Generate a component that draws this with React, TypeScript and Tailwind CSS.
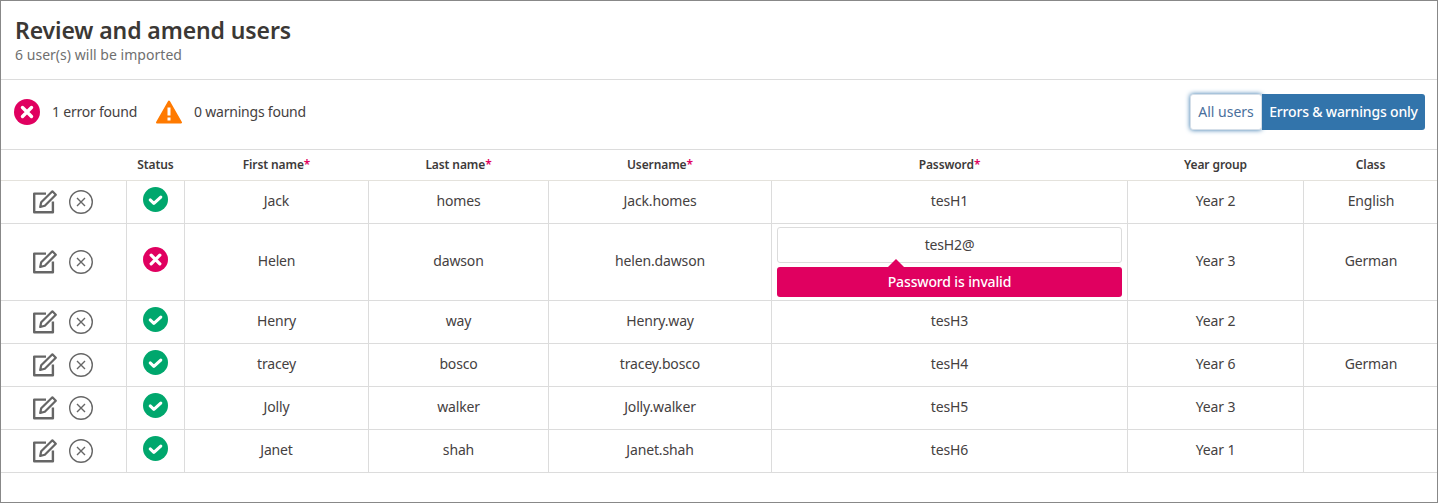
const font = 'font-["Noto_Sans",sans-serif]'

type User = {
  first: string
  last: string
  username: string
  password: string
  year: string
  cls: string
  invalid?: boolean
}

const users: User[] = [
  { first: 'Jack', last: 'homes', username: 'Jack.homes', password: 'tesH1', year: 'Year 2', cls: 'English' },
  { first: 'Helen', last: 'dawson', username: 'helen.dawson', password: 'tesH2@', year: 'Year 3', cls: 'German', invalid: true },
  { first: 'Henry', last: 'way', username: 'Henry.way', password: 'tesH3', year: 'Year 2', cls: '' },
  { first: 'tracey', last: 'bosco', username: 'tracey.bosco', password: 'tesH4', year: 'Year 6', cls: 'German' },
  { first: 'Jolly', last: 'walker', username: 'Jolly.walker', password: 'tesH5', year: 'Year 3', cls: '' },
  { first: 'Janet', last: 'shah', username: 'Janet.shah', password: 'tesH6', year: 'Year 1', cls: '' },
]

const cols = 'grid grid-cols-[126px_58px_184px_180px_223px_356px_176px_134px]'

function ErrorDot({ size }: { size: number }) {
  return (
    <svg width={size} height={size} viewBox="0 0 26 26">
      <circle cx="13" cy="13" r="13" fill="#e00060" />
      <path d="M8.5 8.5l9 9M17.5 8.5l-9 9" stroke="#fff" strokeWidth="3.4" strokeLinecap="round" />
    </svg>
  )
}

function OkDot() {
  return (
    <svg width="25" height="25" viewBox="0 0 26 26">
      <circle cx="13" cy="13" r="13" fill="#00a76d" />
      <path d="M7.5 13.5l3.8 3.6 7.2-6.6" fill="none" stroke="#fff" strokeWidth="3.2" strokeLinecap="round" strokeLinejoin="round" />
    </svg>
  )
}

function EditIcon() {
  return (
    <svg width="24" height="24" viewBox="0 0 24 24" fill="none" stroke="currentColor" strokeLinejoin="round">
      <path d="M13 3.6H1.2v18.7h18.7V11.5" strokeWidth="2.4" />
      <path d="M7.2 17l1-4.7L19.4 1.3l3.4 3.4L11.8 15.8z" strokeWidth="2.2" />
    </svg>
  )
}

function Head({ label, required }: { label: string; required?: boolean }) {
  return (
    <div className="flex items-center justify-center pr-px text-xs font-semibold tracking-[-0.1px] text-[#3d3a3a]">
      {label}
      {required && <span className="text-[#e00060]">*</span>}
    </div>
  )
}

function Cell({ children, last, text }: { children?: React.ReactNode; last?: boolean; text?: boolean }) {
  return (
    <div
      className={`flex items-center justify-center text-sm tracking-[-0.15px] text-[#45413f] ${text ? 'pb-[2px]' : ''} ${last ? '' : 'border-r border-[#dcdcdc]'}`}
    >
      {children}
    </div>
  )
}

export default function App() {
  return (
    <div className={`h-[503px] w-[1438px] overflow-hidden border border-[#888] bg-white ${font}`}>
      <div className="h-[79px] border-b border-[#dcdcdc] px-3.5 pt-[14px]">
        <h1 className="text-[23px] leading-[30px] font-semibold tracking-[-0.1px] text-[#3b3835]">Review and amend users</h1>
        <p className="text-sm leading-[20px] tracking-[0.03px] text-[#6f6f6f]">6 user(s) will be imported</p>
      </div>

      <div className="flex h-[70px] items-center justify-between border-b border-[#dcdcdc] pr-3 pb-[5px] pl-[13px]">
        <div className="flex items-center text-sm tracking-[-0.22px] text-[#45413f]">
          <ErrorDot size={26} />
          <span className="ml-[12px]">1 error found</span>
          <svg className="ml-[19px]" width="26" height="24" viewBox="0 0 26 24">
            <path d="M13 1.5L25 22.5H1Z" fill="#ff7a00" stroke="#ff7a00" strokeWidth="2" strokeLinejoin="round" />
            <path d="M13 7.5v8" stroke="#fff" strokeWidth="3" />
            <path d="M13 17.5v3" stroke="#fff" strokeWidth="3" />
          </svg>
          <span className="ml-[12px]">0 warnings found</span>
        </div>
        <div className="flex h-[36px] text-sm">
          <button className="relative z-10 flex w-[72px] items-center justify-center rounded-[3px] border border-[#d5dfe9] bg-white text-[#4a6f9c] shadow-[0_0_5px_#3274ab]">
            All users
          </button>
          <button className="flex w-[163px] items-center justify-center rounded-r-[3px] bg-[#3274ab] font-medium tracking-[-0.17px] text-white">
            Errors &amp; warnings only
          </button>
        </div>
      </div>

      <div className={`${cols} h-[31px] border-b border-[#e4e2dc]`}>
        <div />
        <Head label="Status" />
        <Head label="First name" required />
        <Head label="Last name" required />
        <Head label="Username" required />
        <Head label="Password" required />
        <Head label="Year group" />
        <Head label="Class" />
      </div>

      {users.map((u) => (
        <div key={u.username} className={`${cols} border-b border-[#dcdcdc] ${u.invalid ? 'h-[77px]' : 'h-[43px]'}`}>
          <Cell>
            <div className="flex items-center gap-[12px] pr-[2px] text-[#666]">
              <EditIcon />
              <svg width="24" height="24" viewBox="0 0 24 24" fill="none" stroke="currentColor">
                <circle cx="12" cy="12" r="11.3" strokeWidth="1.4" />
                <path d="M8 8l8 8M16 8l-8 8" strokeWidth="1.4" />
              </svg>
            </div>
          </Cell>
          <Cell>
            <div className="-mt-[5px] flex">{u.invalid ? <ErrorDot size={25} /> : <OkDot />}</div>
          </Cell>
          <Cell text>{u.first}</Cell>
          <Cell text>{u.last}</Cell>
          <Cell text>{u.username}</Cell>
          <Cell text={!u.invalid}>
            {u.invalid ? (
              <div className="flex w-full flex-col gap-1 px-[5px]">
                <div className="flex h-9 items-center justify-center rounded-[3px] border border-[#dcdcdc] bg-white">
                  {u.password}
                </div>
                <div className="relative flex h-[30px] items-center justify-center rounded-[3px] bg-[#e00060] font-medium text-white">
                  <span className="absolute -top-[8px] left-[111px] h-0 w-0 border-x-[8px] border-b-[8px] border-x-transparent border-b-[#e00060]" />
                  Password is invalid
                </div>
              </div>
            ) : (
              u.password
            )}
          </Cell>
          <Cell text>{u.year}</Cell>
          <Cell text last>
            {u.cls}
          </Cell>
        </div>
      ))}
    </div>
  )
}
